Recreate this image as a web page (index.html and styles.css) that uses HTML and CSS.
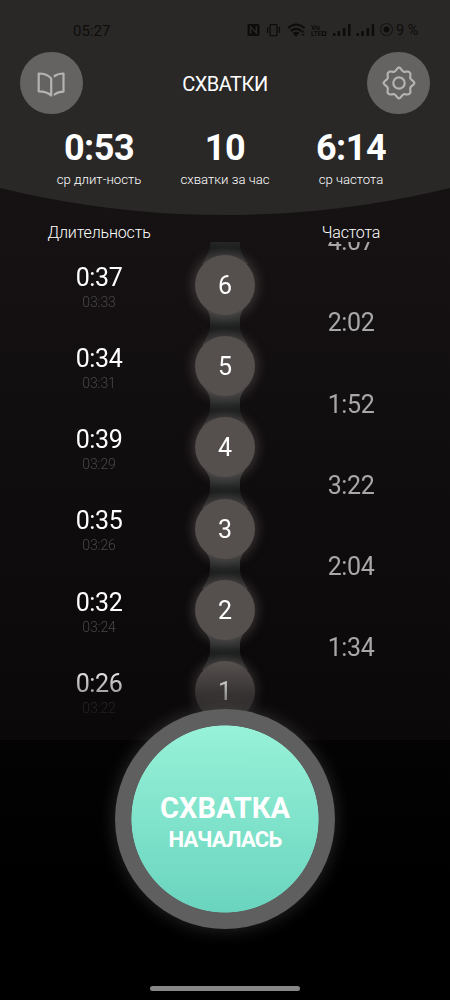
FILE: index.html
```html
<!DOCTYPE html>
<html lang="ru">
<head>
<meta charset="utf-8">
<title>Схватки</title>
<link rel="stylesheet" href="styles.css">
</head>
<body>
<svg class="defs" width="0" height="0">
  <defs>
    <linearGradient id="neck" x1="0" y1="0" x2="0" y2="1">
      <stop offset="0" stop-color="#3b3b3a"/>
      <stop offset="0.35" stop-color="#2b2d2d"/>
      <stop offset="0.58" stop-color="#1a1c1c"/>
      <stop offset="1" stop-color="#2e2d2d"/>
    </linearGradient>
    <path id="link" d="M20 0 Q25 6 25 12 V19 Q25 26 17 38 H63 Q55 26 55 19 V12 Q55 6 60 0 Z" fill="url(#neck)"/>
    <path id="cog" d="M0 -15.3 C2.4 -15.3 2.4 -11.8 4.9 -11.2 C7 -10.8 9 -12.6 10.6 -10.6 C12.6 -9 10.8 -7 11.2 -4.9 C11.8 -2.4 15.3 -2.4 15.3 0"/>
  </defs>
</svg>
<div class="screen">
  <header class="top">
    <div class="status">
      <span class="clock">05:27</span>
      <svg class="indicators" width="147" height="16" viewBox="0 0 147 16">
        <rect x="0.5" y="2" width="12" height="12" rx="1.8" fill="#0d0c0b"/>
        <path d="M3.6 12 V4.6 L9.4 11 V4" fill="none" stroke="#292827" stroke-width="1.5"/>
        <g fill="none" stroke="#0d0c0b" stroke-width="1.3">
          <rect x="23" y="2.6" width="7" height="11" rx="1"/>
          <path d="M20.6 5 V11 M32.4 5 V11"/>
        </g>
        <g fill="none" stroke="#0d0c0b" stroke-width="2.1">
          <path d="M41 6 Q49 -1 57.5 6"/>
          <path d="M43.8 9.1 Q49 4.7 54.6 9.1"/>
          <path d="M46.3 11.9 Q49 9.7 51.8 11.9"/>
        </g>
        <circle cx="49" cy="13" r="1.4" fill="#0d0c0b"/>
        <path d="M54.3 10.6 L56 8.6 L57.7 10.6 Z M54.3 12 L56 14 L57.7 12 Z" fill="#0d0c0b"/>
        <text x="64" y="7.5" class="volte">Vo</text>
        <text x="64" y="14" class="volte" textLength="10.5" lengthAdjust="spacingAndGlyphs">LTE</text>
        <rect x="75.5" y="9.8" width="3.2" height="3.6" fill="none" stroke="#0d0c0b" stroke-width="1.2"/>
        <path d="M86 11h2.5v3h-2.5z M90.6 9h2.5v5h-2.5z M95.8 6h2.7v8h-2.7z M101 2h2.5v12h-2.5z" fill="#0d0c0b"/>
        <path d="M109.5 11h2.5v3h-2.5z M114.3 9h2.5v5h-2.5z M119.5 6h2.7v8h-2.7z M124.7 2h2.5v12h-2.5z" fill="#0d0c0b"/>
        <circle cx="139.5" cy="7.5" r="6" fill="none" stroke="#171615" stroke-width="1.2"/>
        <circle cx="139.5" cy="7.5" r="2.9" fill="#0d0c0b"/>
      </svg>
      <span class="battery">9 %</span>
    </div>
    <div class="bar">
      <button class="round" aria-label="Справка">
        <svg width="62" height="62" viewBox="0 0 62 62" class="line">
          <path d="M18.7 21.5 V39.3 Q27 39.3 31.2 43.5 V26.5 Q27 21.5 18.7 21.5 Z"/>
          <path d="M34.6 24 Q38 21.5 43.5 21.5 V39.7 Q38 39.7 34.6 42.5"/>
        </svg>
      </button>
      <h1 class="title">СХВАТКИ</h1>
      <button class="round" aria-label="Настройки">
        <svg width="62" height="62" viewBox="-31 -31 62 62" class="line">
          <use href="#cog"/>
          <use href="#cog" transform="rotate(90)"/>
          <use href="#cog" transform="rotate(180)"/>
          <use href="#cog" transform="rotate(270)"/>
          <circle r="5.7"/>
        </svg>
      </button>
    </div>
    <div class="stats">
      <div class="stat"><b>0:53</b><span>ср длит-ность</span></div>
      <div class="stat"><b>10</b><span>схватки за час</span></div>
      <div class="stat"><b>6:14</b><span>ср частота</span></div>
    </div>
  </header>

  <div class="heads"><span>Длительность</span><span></span><span>Частота</span></div>

  <main class="list">
    <div class="col durations">
      <div class="entry"><span class="len">0:37</span><span class="at">03:33</span></div>
      <div class="entry"><span class="len">0:34</span><span class="at">03:31</span></div>
      <div class="entry"><span class="len">0:39</span><span class="at">03:29</span></div>
      <div class="entry"><span class="len">0:35</span><span class="at">03:26</span></div>
      <div class="entry"><span class="len">0:32</span><span class="at">03:24</span></div>
      <div class="entry"><span class="len">0:26</span><span class="at">03:22</span></div>
    </div>
    <div class="col beads">
      <div class="bead"><svg class="link" width="80" height="38"><use href="#link"/></svg><span class="dot">6</span></div>
      <div class="bead"><svg class="link" width="80" height="38"><use href="#link"/></svg><span class="dot">5</span></div>
      <div class="bead"><svg class="link" width="80" height="38"><use href="#link"/></svg><span class="dot">4</span></div>
      <div class="bead"><svg class="link" width="80" height="38"><use href="#link"/></svg><span class="dot">3</span></div>
      <div class="bead"><svg class="link" width="80" height="38"><use href="#link"/></svg><span class="dot">2</span></div>
      <div class="bead"><svg class="link" width="80" height="38"><use href="#link"/></svg><span class="dot">1</span></div>
    </div>
    <div class="col gaps">
      <div class="gap">4:07</div>
      <div class="gap">2:02</div>
      <div class="gap">1:52</div>
      <div class="gap">3:22</div>
      <div class="gap">2:04</div>
      <div class="gap">1:34</div>
    </div>
  </main>

  <footer class="bottom">
    <button class="start"><strong>СХВАТКА</strong><span>НАЧАЛАСЬ</span></button>
    <div class="handle"></div>
  </footer>
</div>
</body>
</html>
```

FILE: styles.css
```css
* { box-sizing: border-box; }

body {
  margin: 0;
  background: #000;
  font-family: Roboto, "Liberation Sans", sans-serif;
  color: #fff;
}

button {
  border: 0;
  padding: 0;
  font: inherit;
  color: inherit;
}

.defs { position: absolute; }

.screen {
  width: 450px;
  height: 1000px;
  display: flex;
  flex-direction: column;
  overflow: hidden;
  background: linear-gradient(#161213 215px, #0a0809 740px, #030303 740px, #000 900px);
}

.top {
  flex: none;
  height: 215px;
  background: #292827;
  clip-path: circle(951px at 50% -736px);
}

.status {
  height: 52px;
  padding: 9px 31px 0 73px;
  display: flex;
  align-items: center;
  color: #0d0c0b;
}

.clock {
  font-size: 15px;
  width: 174px;
}

.indicators {
  flex: none;
  margin-top: -1px;
}

.volte {
  font: 700 7.5px Roboto, sans-serif;
  fill: #0d0c0b;
}

.battery {
  margin-left: 2px;
  font-size: 14.5px;
  white-space: nowrap;
}

.bar {
  height: 62px;
  padding: 0 20px;
  display: flex;
  align-items: center;
  justify-content: space-between;
}

.round {
  width: 62.5px;
  height: 62.5px;
  border-radius: 50%;
  background: #646361;
  display: flex;
  align-items: center;
  justify-content: center;
}

.line {
  fill: none;
  stroke: #b4b3b1;
  stroke-width: 2.2;
  stroke-linejoin: round;
  stroke-linecap: round;
}

.title {
  margin: 2px 0 0;
  font-size: 20px;
  letter-spacing: -0.5px;
  font-weight: 400;
}

.stats {
  display: grid;
  grid-template-columns: repeat(3, 126px);
  padding: 13px 36px 0;
  text-align: center;
}

.stat {
  display: flex;
  flex-direction: column;
}

.stat b {
  font-size: 36px;
  letter-spacing: -0.5px;
  line-height: 42px;
}

.stat span {
  margin-top: 3px;
  font-size: 13.2px;
  line-height: 16px;
  font-weight: 300;
}

.heads {
  flex: none;
  height: 27px;
  padding: 8px 36px 0;
  display: grid;
  grid-template-columns: repeat(3, 126px);
  text-align: center;
  font-size: 16px;
  letter-spacing: -0.15px;
  line-height: 19px;
  font-weight: 300;
}

.list {
  flex: none;
  height: 498px;
  padding: 0 36px;
  display: grid;
  grid-template-columns: repeat(3, 126px);
  align-items: start;
  overflow: hidden;
  text-align: center;
  mask-image: linear-gradient(#000 422px, transparent 498px);
}

.col {
  display: grid;
  grid-auto-rows: 81.25px;
}

.durations { padding-top: 20.6px; }

.entry {
  display: flex;
  flex-direction: column;
}

.len {
  font-size: 25px;
  letter-spacing: -0.4px;
  line-height: 30px;
}

.at {
  font-size: 14px;
  letter-spacing: -0.1px;
  line-height: 18px;
  font-weight: 300;
  color: #4a4748;
}

.beads {
  position: relative;
  z-index: 0;
  margin-top: 2.2px;
}

.bead {
  position: relative;
  display: flex;
  align-items: center;
  justify-content: center;
}

/* neck joining a bead with the one above it, below both beads */
.link {
  position: absolute;
  z-index: -1;
  top: -18px;
  left: 23px;
}

.dot {
  width: 60px;
  height: 60px;
  border-radius: 50%;
  background: #554f4e;
  box-shadow: 0 0 12px 2px rgba(125, 115, 112, 0.42);
  font-size: 25px;
  line-height: 62px;
}

.gaps { margin-top: -41px; }

.gap {
  font-size: 25px;
  letter-spacing: -0.4px;
  line-height: 81.25px;
  color: #a9a7a8;
}

.bottom {
  flex: 1;
  display: flex;
  flex-direction: column;
  align-items: center;
  justify-content: space-between;
  padding-bottom: 9px;
}

.start {
  position: relative;
  width: 220px;
  height: 220px;
  margin-top: -31px;
  border-radius: 50%;
  background:
    radial-gradient(circle, transparent 93.2px, #5f5f5f 93.9px),
    linear-gradient(#97f2d8 16px, #6ad4be 204px);
  box-shadow: 0 0 18px rgba(255, 255, 255, 0.16);
  display: flex;
  flex-direction: column;
  align-items: center;
  justify-content: center;
}

.start strong {
  font-size: 29px;
  line-height: 34px;
  margin-top: 6px;
}

.start span {
  font-size: 22px;
  letter-spacing: -0.7px;
  line-height: 29px;
  font-weight: 700;
}

.handle {
  width: 150px;
  height: 5px;
  border-radius: 3px;
  background: #878787;
}
```
